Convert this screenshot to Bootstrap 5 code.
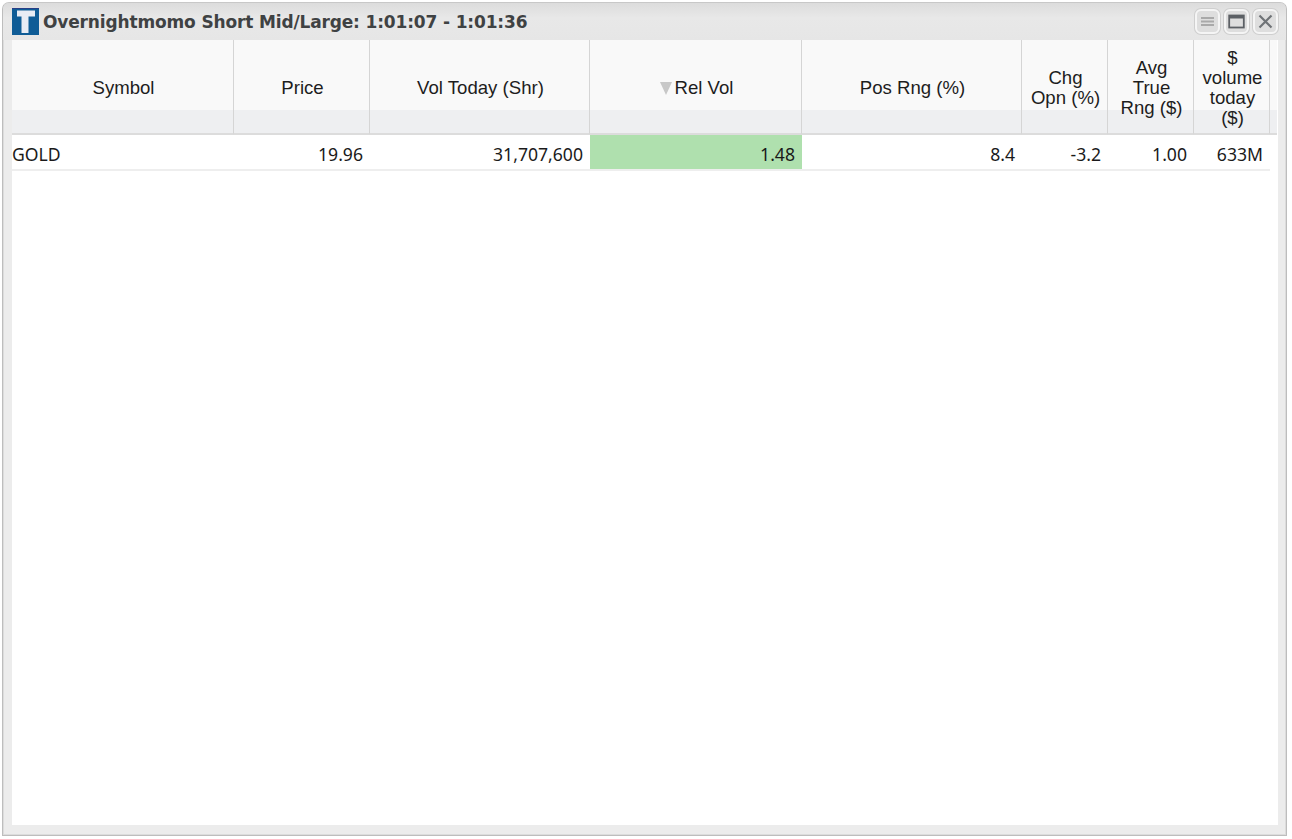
<!DOCTYPE html>
<html lang="en">
<head>
<meta charset="utf-8">
<title>Overnightmomo Short Mid/Large</title>
<link href="https://cdn.jsdelivr.net/npm/bootstrap@5.3.0/dist/css/bootstrap.min.css" rel="stylesheet">
<style>
html,body{height:100%;margin:0;background:#fff;overflow:hidden}
.win-shell{height:839px;padding:2px 5px 3px 2px;background:#fff}
.win-frame{height:100%;background:#ececec;border:1px solid #bdbdbd;border-top-color:#c8c8c8;border-radius:7px 7px 0 0;box-shadow:inset 0 0 0 1px #dcdcdc;padding:0 8px 10px 9px}
.win-title{height:37px;flex:none;margin:0 -8px 0 -9px;padding:0 8px 0 9px;background:linear-gradient(#dcdcdc,#e8e8e8 40%,#e6e6e6);border-radius:6px 6px 0 0}
.win-name{font:700 17px/1 "DejaVu Sans",sans-serif;color:#3f4243;white-space:nowrap;letter-spacing:-.15px;padding-top:2px}
.win-logo{width:27px;height:27px;flex:none}
.win-btn{width:25px;height:25px;padding:0;border:2px solid #f5f5f5;border-radius:6px;background:#dedede;box-shadow:0 0 0 1px #cfcfcf;display:flex;align-items:center;justify-content:center}
.win-btn svg{display:block}
.win-body{flex:1 1 auto;min-height:0;background:#fff}
.quote-table{table-layout:fixed;width:1265px;margin:0;border-collapse:separate;border-spacing:0}
.quote-table th{height:95px;padding:3px 5px 0 7px;vertical-align:middle;text-align:center;font:400 18.6px/20px "Liberation Sans",Arial,sans-serif;color:#1d1d1d;background:linear-gradient(#f9f9f9 0,#f9f9f9 70px,#eeeff1 70px,#eeeff1 100%);border:0;border-right:1px solid #d5d5d5;border-bottom:2px solid #dcdcdc;box-shadow:none}
.quote-table th.fill-col{border-right:0;padding:0}
.quote-table td{height:36px;padding:5px 7px 0 6px;vertical-align:middle;text-align:right;font:400 17.600px/1 "Noto Sans",sans-serif;color:#1a1a1a;background:#fff;border:0;border-bottom:2px solid #eee;box-shadow:none}
.quote-table td.sym-cell{text-align:left;padding-left:0}
.quote-table td.rel-cell{background:#afe0ae;border-bottom-color:#eee}
.quote-table td.fill-col{border-bottom:0;padding:0}
.sort-tri{display:inline-block;width:0;height:0;border-left:6.5px solid transparent;border-right:6.5px solid transparent;border-top:13px solid #c8c8c8;margin-right:3px;vertical-align:-1px}
</style>
</head>
<body>
<div class="win-shell">
  <div class="win-frame d-flex flex-column">
    <div class="win-title d-flex align-items-center">
      <svg class="win-logo" viewBox="0 0 27 27" role="img" aria-label="T logo">
        <rect width="27" height="27" fill="#0f5c96"/>
        <rect width="27" height="1" fill="#2a3f86"/>
        <path d="M5 2.500H23V8.500H16.500V25H9.500V8.500H5Z" fill="#e8ecf4"/>
      </svg>
      <span class="win-name ms-1">Overnightmomo Short Mid/Large: 1:01:07 - 1:01:36</span>
      <div class="d-flex ms-auto gap-1 align-items-center">
        <button class="win-btn" type="button" aria-label="Menu">
          <svg width="15" height="13" viewBox="0 0 15 13"><path d="M1 3H14M1 6.500H14M1 10H14" stroke="#a9a9a9" stroke-width="1.800" fill="none"/></svg>
        </button>
        <button class="win-btn" type="button" aria-label="Maximize">
          <svg width="17" height="15" viewBox="0 0 17 15"><rect x="1.200" y="1.500" width="14.600" height="12" fill="none" stroke="#5c6065" stroke-width="1.800"/><path d="M1 3H16" stroke="#5c6065" stroke-width="3"/></svg>
        </button>
        <button class="win-btn" type="button" aria-label="Close">
          <svg width="15" height="15" viewBox="0 0 15 15"><path d="M1.500 1.500L13.500 13.500M13.500 1.500L1.500 13.500" stroke="#6f7377" stroke-width="2.200" fill="none"/></svg>
        </button>
      </div>
    </div>
    <div class="win-body">
      <table class="table quote-table">
        <colgroup>
          <col style="width:222px"><col style="width:136px"><col style="width:220px"><col style="width:212px"><col style="width:220px"><col style="width:86px"><col style="width:86px"><col style="width:76px"><col style="width:7px">
        </colgroup>
        <thead>
          <tr>
            <th>Symbol</th>
            <th>Price</th>
            <th>Vol Today (Shr)</th>
            <th><span class="sort-tri"></span>Rel Vol</th>
            <th>Pos Rng (%)</th>
            <th>Chg<br>Opn (%)</th>
            <th>Avg<br>True<br>Rng ($)</th>
            <th>$<br>volume<br>today<br>($)</th>
            <th class="fill-col"></th>
          </tr>
        </thead>
        <tbody>
          <tr>
            <td class="sym-cell">GOLD</td>
            <td>19.96</td>
            <td>31,707,600</td>
            <td class="rel-cell">1.48</td>
            <td>8.4</td>
            <td>-3.2</td>
            <td>1.00</td>
            <td>633M</td>
            <td class="fill-col"></td>
          </tr>
        </tbody>
      </table>
    </div>
  </div>
</div>
</body>
</html>
